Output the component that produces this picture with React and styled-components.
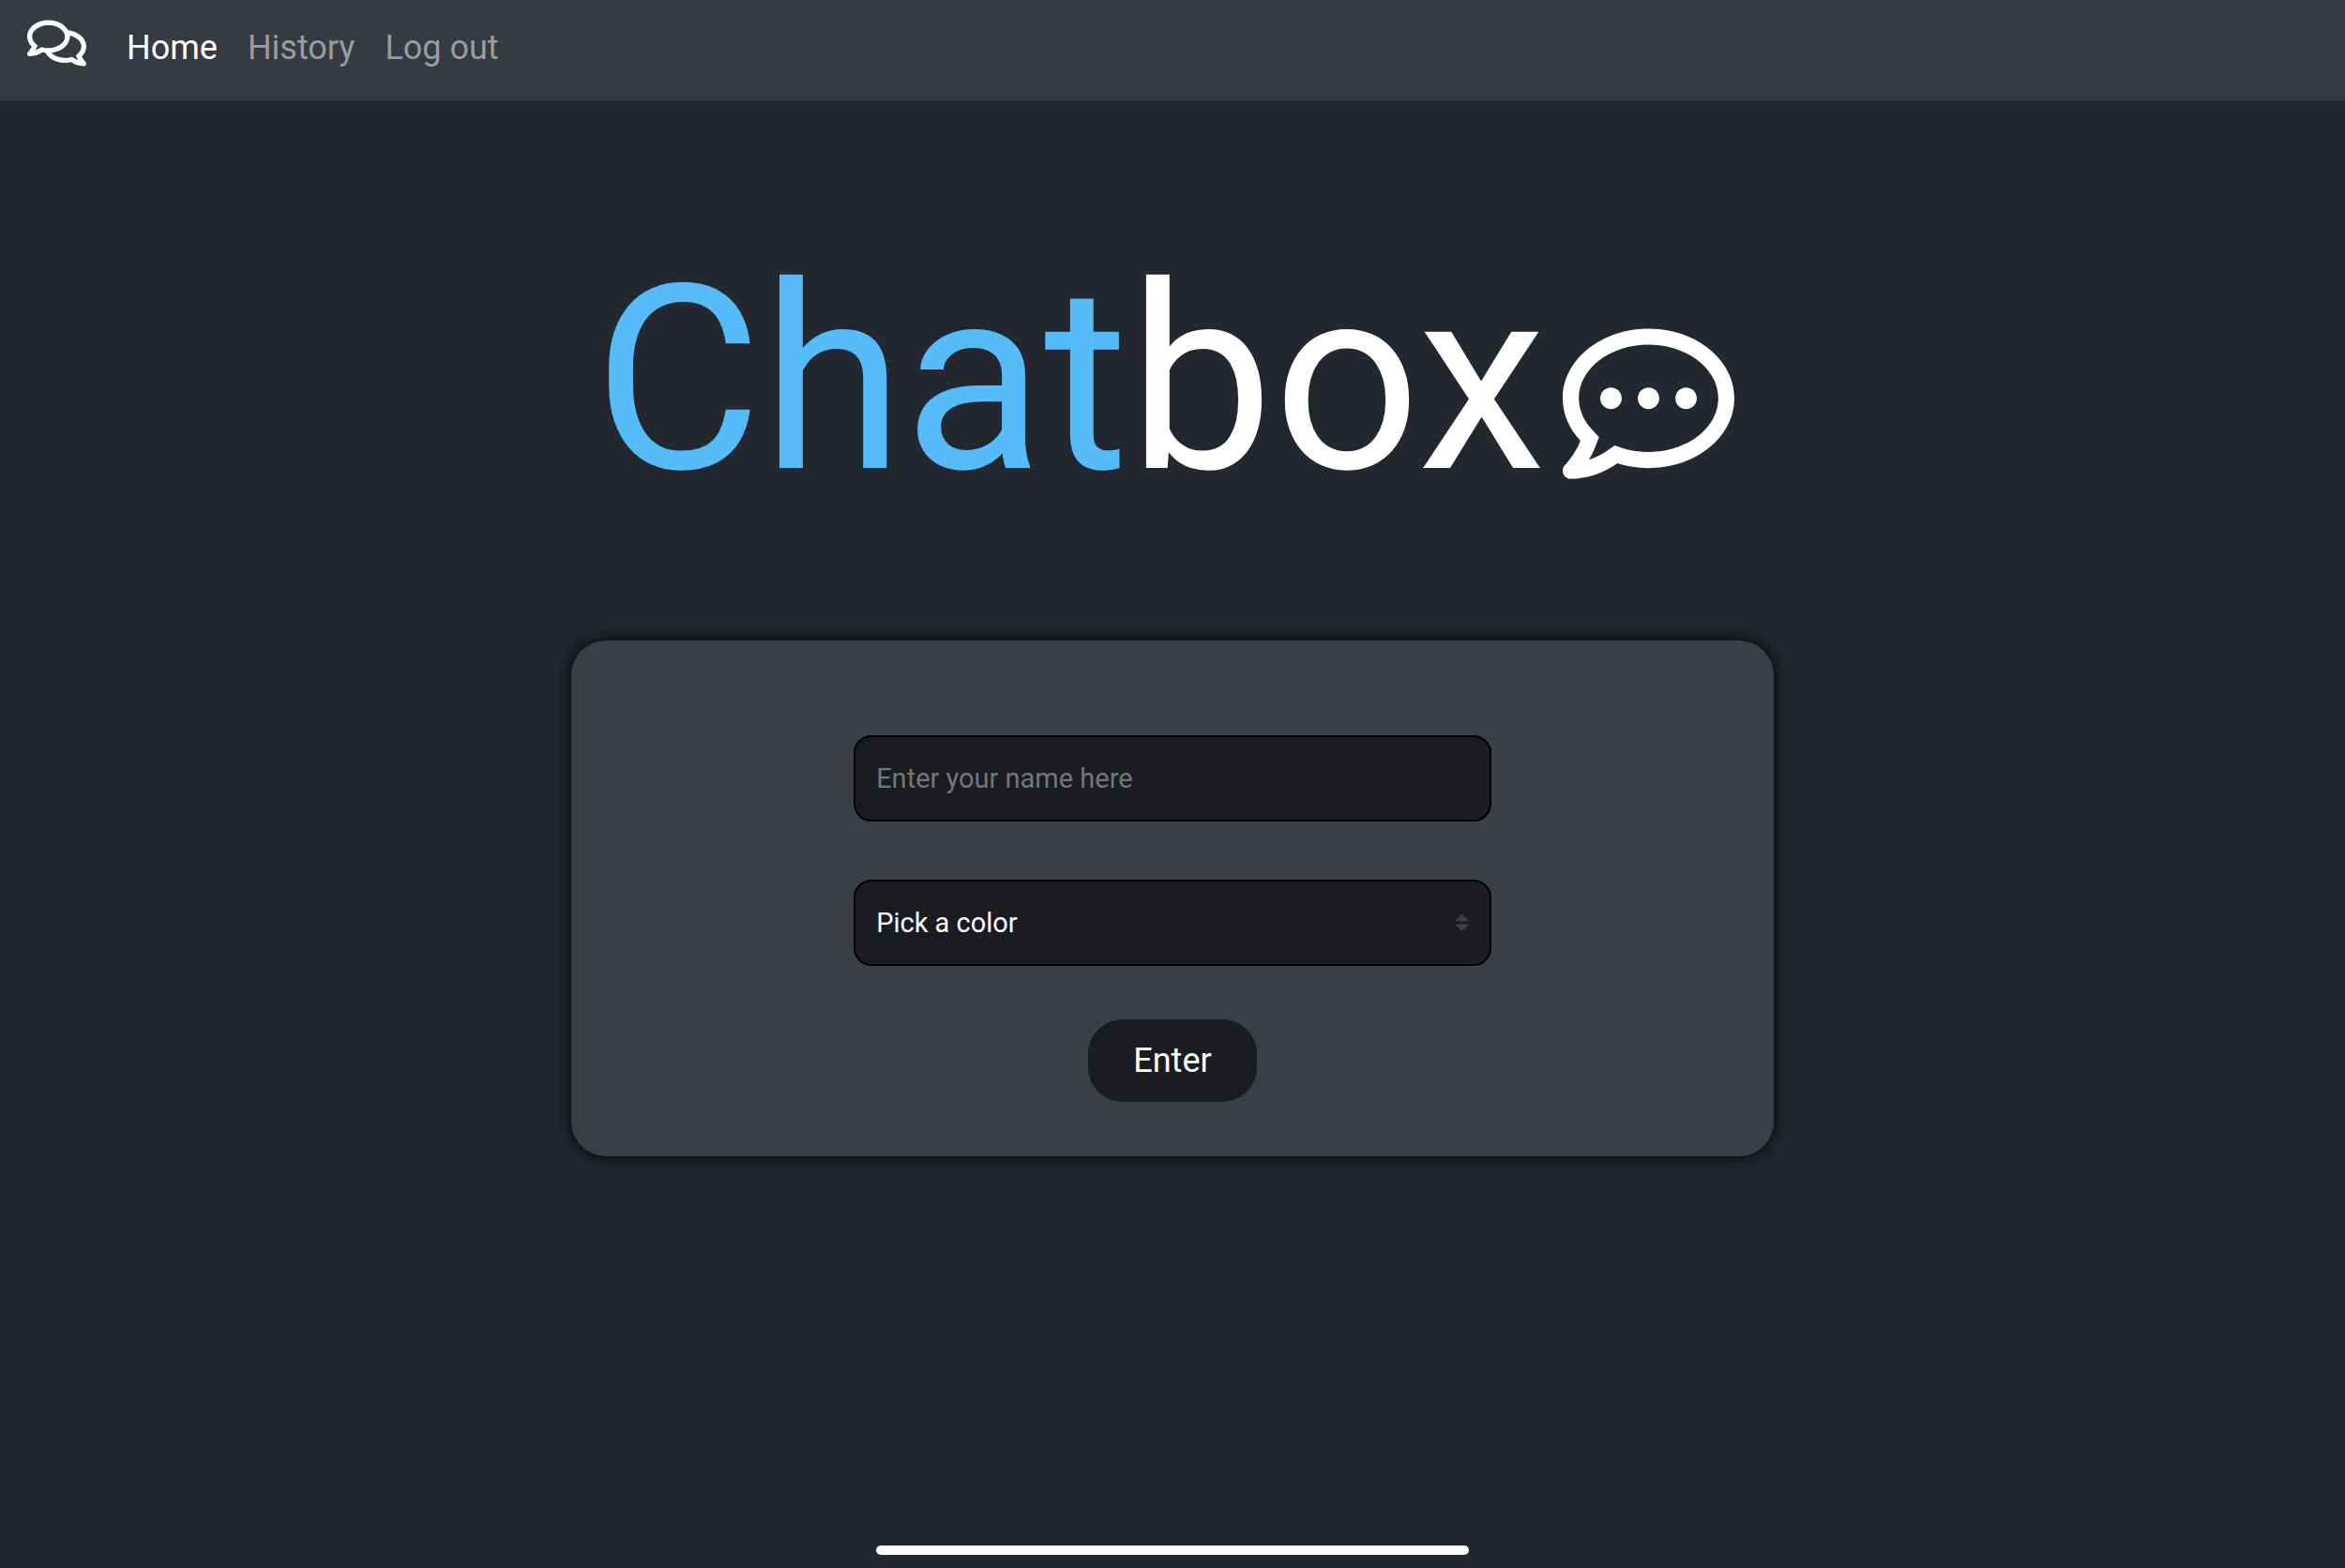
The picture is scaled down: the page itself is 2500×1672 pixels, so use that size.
// App.jsx
import { useState } from 'react';
import styled, { createGlobalStyle } from 'styled-components';
import { FaRegComments, FaRegCommentDots } from 'react-icons/fa';

const GlobalStyle = createGlobalStyle`
  * {
    box-sizing: border-box;
  }

  body {
    margin: 0;
    background: #23272f;
    color: #ffffff;
    font-family: Roboto, sans-serif;
  }
`;

const Page = styled.div`
  min-height: 100vh;
  display: flex;
  flex-direction: column;
`;

const Navbar = styled.header`
  display: flex;
  align-items: flex-start;
  height: 107px;
  padding: 18px 29px;
  background: #363a41;
`;

const Brand = styled.a`
  display: flex;
  margin-right: 27px;
  color: #ffffff;

  svg {
    width: 63px;
    height: 56px;
  }
`;

const Nav = styled.nav`
  display: flex;
`;

const NavLink = styled.a`
  padding: 12px 16px;
  color: ${({ $active }) => ($active ? '#ffffff' : '#9a9ca1')};
  font-size: 36px;
  line-height: 43px;
  text-decoration: none;
`;

const Main = styled.main`
  flex: 1;
  display: flex;
  flex-direction: column;
  align-items: center;
`;

const Title = styled.h1`
  display: flex;
  align-items: flex-end;
  margin: 138px 0 118px;
  padding-right: 18px;
  font-size: 275px;
  line-height: 320px;
  font-weight: 400;

  svg {
    width: 183px;
    height: 183px;
    margin: 0 0 43px 18px;
  }
`;

const Accent = styled.span`
  color: #55bbf9;
`;

const Card = styled.form`
  width: 51.3%;
  min-width: 720px;
  display: flex;
  flex-direction: column;
  align-items: center;
  padding: 101px 0 58px;
  border-radius: 37px;
  background: #3a3e45;
  box-shadow: 0 0 18px #000000;
`;

const Fields = styled.div`
  width: 53%;
  display: flex;
  flex-direction: column;
  gap: 62px;
  margin-bottom: 57px;
`;

const SelectWrap = styled.div`
  position: relative;

  svg {
    position: absolute;
    top: 50%;
    right: 24px;
    width: 15px;
    height: 20px;
    transform: translateY(-50%);
    fill: #3f4044;
    pointer-events: none;
  }
`;

const Input = styled.input`
  display: block;
  width: 100%;
  height: 92px;
  padding: 0 22px;
  border: 2px solid #000000;
  border-radius: 19px;
  background: #1b1c1f;
  color: #ffffff;
  font-family: inherit;
  font-size: 29px;

  &::placeholder {
    color: #74767c;
    opacity: 1;
  }
`;

const Select = styled(Input).attrs({ as: 'select' })`
  appearance: none;
`;

const EnterButton = styled.button`
  height: 88px;
  padding: 0 48px;
  border: none;
  border-radius: 37px;
  background: #1b1c1f;
  color: #ffffff;
  font-family: inherit;
  font-size: 36px;
  cursor: pointer;
`;

const HomeBar = styled.div`
  width: 632px;
  height: 10px;
  margin: 40px auto 14px;
  border-radius: 5px;
  background: #ffffff;
`;

const links = [
  { label: 'Home', href: '#home' },
  { label: 'History', href: '#history' },
  { label: 'Log out', href: '#logout' },
];

const colors = ['Red', 'Green', 'Blue', 'Yellow'];

const App = () => {
  const [name, setName] = useState('');
  const [color, setColor] = useState('');

  return (
    <>
      <GlobalStyle />
      <Page>
        <Navbar>
          <Brand href="#home" aria-label="Chatbox">
            <FaRegComments />
          </Brand>
          <Nav>
            {links.map((link, index) => (
              <NavLink key={link.href} href={link.href} $active={index === 0}>
                {link.label}
              </NavLink>
            ))}
          </Nav>
        </Navbar>

        <Main>
          <Title>
            <Accent>Chat</Accent>
            <span>box</span>
            <FaRegCommentDots />
          </Title>

          <Card onSubmit={(e) => e.preventDefault()}>
            <Fields>
              <Input
                type="text"
                aria-label="Name"
                placeholder="Enter your name here"
                value={name}
                onChange={(e) => setName(e.target.value)}
              />
              <SelectWrap>
                <Select
                  aria-label="Color"
                  value={color}
                  onChange={(e) => setColor(e.target.value)}
                >
                  <option value="">Pick a color</option>
                  {colors.map((item) => (
                    <option key={item} value={item}>
                      {item}
                    </option>
                  ))}
                </Select>
                <svg viewBox="0 0 15 20" aria-hidden="true">
                  <path d="M7.5 0.5L15 8.5H0zM0 11.5H15L7.5 19z" />
                </svg>
              </SelectWrap>
            </Fields>
            <EnterButton type="submit">Enter</EnterButton>
          </Card>
        </Main>

        <HomeBar />
      </Page>
    </>
  );
};

export default App;
